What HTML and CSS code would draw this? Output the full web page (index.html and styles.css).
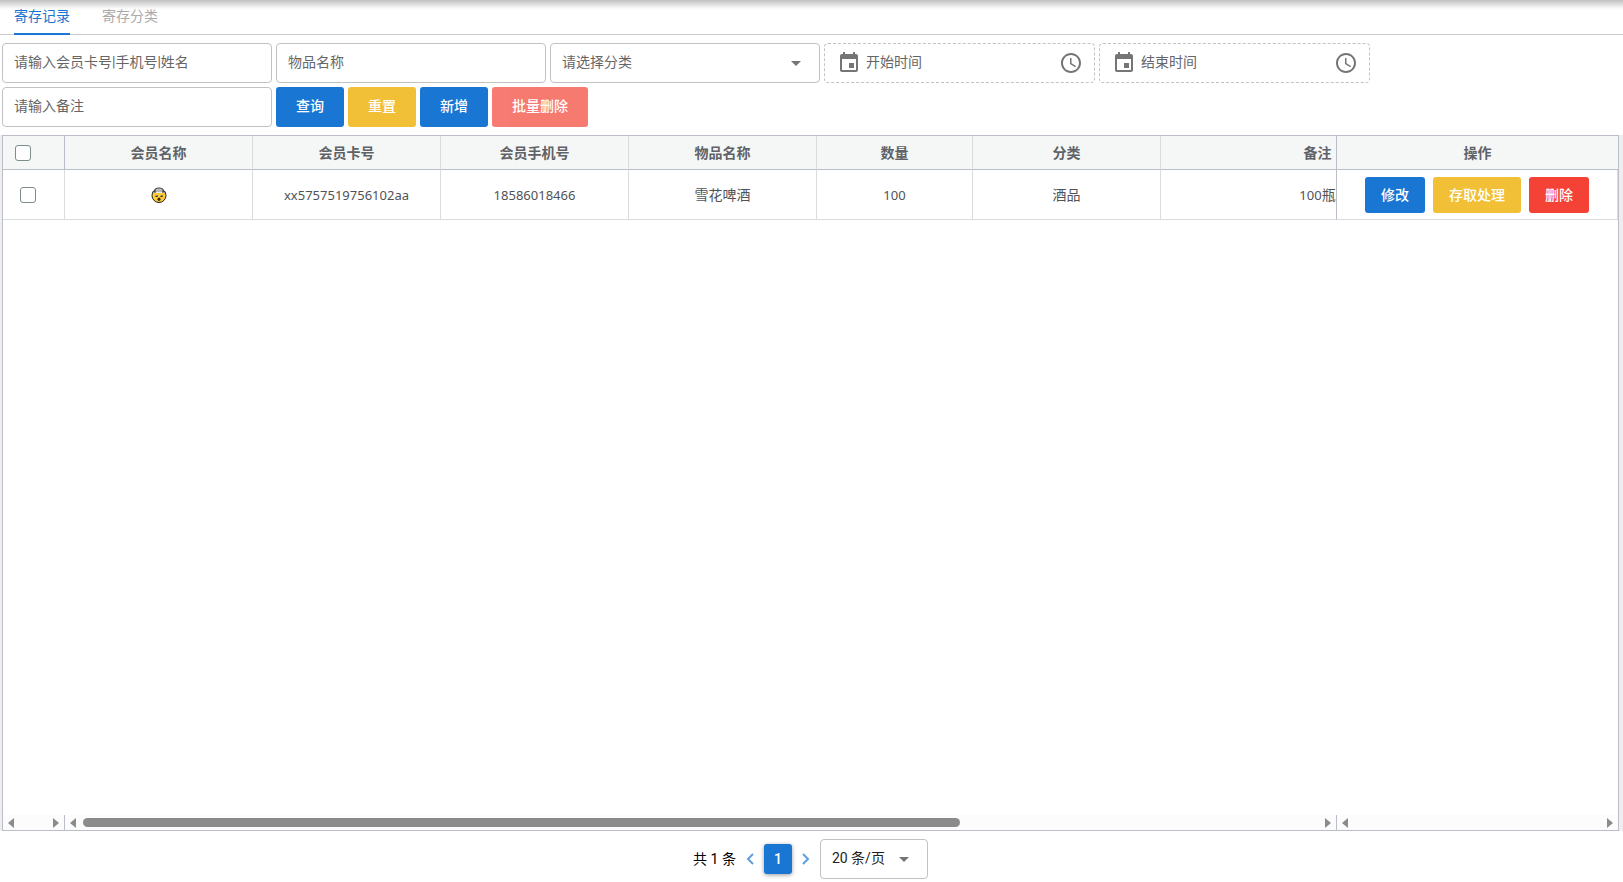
FILE: index.html
```html
<!DOCTYPE html>
<html lang="zh-CN">
<head>
<meta charset="utf-8">
<title>寄存记录</title>
<link rel="stylesheet" href="styles.css">
</head>
<body>
<nav class="tabs">
  <button class="tab tab-active" type="button">寄存记录</button>
  <button class="tab" type="button">寄存分类</button>
</nav>

<form class="filters">
  <input class="field" type="text" aria-label="会员" placeholder="请输入会员卡号|手机号|姓名">
  <input class="field" type="text" aria-label="物品名称" placeholder="物品名称">
  <div class="picker">
    <select class="field" aria-label="分类"><option>请选择分类</option></select>
    <svg class="caret" viewBox="0 0 24 24" aria-hidden="true"><path d="M7 10l5 5 5-5z"/></svg>
  </div>
  <label class="field date">
    <svg class="icon" viewBox="0 0 24 24" aria-hidden="true"><path d="M17 12h-5v5h5v-5zM16 1v2H8V1H6v2H5c-1.11 0-1.99.9-1.99 2L3 19c0 1.1.89 2 2 2h14c1.1 0 2-.9 2-2V5c0-1.1-.9-2-2-2h-1V1h-2zm3 18H5V8h14v11z"/></svg>
    <input class="date-input" type="text" aria-label="开始时间" placeholder="开始时间">
    <svg class="icon" viewBox="0 0 24 24" aria-hidden="true"><path d="M11.99 2C6.47 2 2 6.48 2 12s4.47 10 9.99 10C17.52 22 22 17.52 22 12S17.52 2 11.99 2zM12 20c-4.42 0-8-3.58-8-8s3.58-8 8-8 8 3.58 8 8-3.58 8-8 8zm.5-13H11v6l5.25 3.15.75-1.23-4.5-2.67z"/></svg>
  </label>
  <label class="field date">
    <svg class="icon" viewBox="0 0 24 24" aria-hidden="true"><path d="M17 12h-5v5h5v-5zM16 1v2H8V1H6v2H5c-1.11 0-1.99.9-1.99 2L3 19c0 1.1.89 2 2 2h14c1.1 0 2-.9 2-2V5c0-1.1-.9-2-2-2h-1V1h-2zm3 18H5V8h14v11z"/></svg>
    <input class="date-input" type="text" aria-label="结束时间" placeholder="结束时间">
    <svg class="icon" viewBox="0 0 24 24" aria-hidden="true"><path d="M11.99 2C6.47 2 2 6.48 2 12s4.47 10 9.99 10C17.52 22 22 17.52 22 12S17.52 2 11.99 2zM12 20c-4.42 0-8-3.58-8-8s3.58-8 8-8 8 3.58 8 8-3.58 8-8 8zm.5-13H11v6l5.25 3.15.75-1.23-4.5-2.67z"/></svg>
  </label>
  <input class="field" type="text" aria-label="备注" placeholder="请输入备注">
  <button class="btn primary" type="button">查询</button>
  <button class="btn warning" type="button">重置</button>
  <button class="btn primary" type="button">新增</button>
  <button class="btn danger" type="button" disabled>批量删除</button>
</form>

<main class="grid-area">
  <div class="grid">
    <section class="pane pane-left">
      <table class="table">
        <thead><tr><th class="pick-head"><input class="check" type="checkbox" aria-label="全选"></th></tr></thead>
        <tbody><tr><td class="pick-cell"><input class="check" type="checkbox" aria-label="选择此行"></td></tr></tbody>
      </table>
      <div class="scroll">
        <svg class="arrow" viewBox="0 0 6 10" aria-hidden="true"><path d="M6 0v10L0 5z"/></svg>
        <div class="track"></div>
        <svg class="arrow" viewBox="0 0 6 10" aria-hidden="true"><path d="M0 0v10l6-5z"/></svg>
      </div>
    </section>
    <section class="pane pane-main">
      <table class="table table-wide">
        <colgroup><col class="c-std"><col class="c-std"><col class="c-std"><col class="c-std"><col class="c-qty"><col class="c-std"><col class="c-note"></colgroup>
        <thead><tr><th>会员名称</th><th>会员卡号</th><th>会员手机号</th><th>物品名称</th><th>数量</th><th>分类</th><th>备注</th></tr></thead>
        <tbody><tr>
          <td>
            <svg class="emoji" viewBox="0 0 16 16" role="img" aria-label="🤯">
              <circle cx="8" cy="8.500" r="7" fill="#fc3" stroke="#222" stroke-width="1"/>
              <path d="M1 6C1 4.800 2 4.200 3.500 4 3 1.500 5.500.5 8 .5s5 1 4.500 3.500C14 4.200 15 4.800 15 6z" fill="#444"/>
              <path d="M4.500 4.500C4 2 6 1.500 8 1.500S12 2 11.500 4.500z" fill="#b9bcbe"/>
              <path d="M2 5h12v1H2z" fill="#8a8d91"/>
              <path d="M5 4.500h6v1.500H5z" fill="#e9eaec"/>
              <path d="M4.500 8h2v2h-2zM9.500 8h2v2h-2z" fill="#222"/>
              <path d="M4.500 8h1v1h-1zM9.500 8h1v1h-1z" fill="#fff3ce"/>
              <ellipse cx="8" cy="12.200" rx="1.500" ry="1.800" fill="#3b2413"/>
            </svg>
          </td>
          <td class="latin">xx5757519756102aa</td><td class="latin">18586018466</td><td>雪花啤酒</td><td class="latin">100</td><td>酒品</td><td><span class="latin">100</span>瓶</td>
        </tr></tbody>
      </table>
      <div class="scroll">
        <svg class="arrow" viewBox="0 0 6 10" aria-hidden="true"><path d="M6 0v10L0 5z"/></svg>
        <div class="track"><div class="thumb"></div></div>
        <svg class="arrow" viewBox="0 0 6 10" aria-hidden="true"><path d="M0 0v10l6-5z"/></svg>
      </div>
    </section>
    <section class="pane pane-right">
      <table class="table">
        <thead><tr><th>操作</th></tr></thead>
        <tbody><tr><td>
          <div class="actions">
            <button class="btn small primary" type="button">修改</button>
            <button class="btn small warning" type="button">存取处理</button>
            <button class="btn small danger" type="button">删除</button>
          </div>
        </td></tr></tbody>
      </table>
      <div class="scroll">
        <svg class="arrow" viewBox="0 0 6 10" aria-hidden="true"><path d="M6 0v10L0 5z"/></svg>
        <div class="track"></div>
        <svg class="arrow" viewBox="0 0 6 10" aria-hidden="true"><path d="M0 0v10l6-5z"/></svg>
      </div>
    </section>
  </div>
</main>

<footer class="pager">
  <span>共 1 条</span>
  <button class="step" type="button" aria-label="上一页"><svg viewBox="0 0 8 12" aria-hidden="true"><path d="M7 1L2 6l5 5"/></svg></button>
  <button class="page" type="button">1</button>
  <button class="step" type="button" aria-label="下一页"><svg viewBox="0 0 8 12" aria-hidden="true"><path d="M1 1l5 5-5 5"/></svg></button>
  <div class="picker page-size">
    <select class="field" aria-label="每页条数"><option>20 条/页</option></select>
    <svg class="caret" viewBox="0 0 24 24" aria-hidden="true"><path d="M7 10l5 5 5-5z"/></svg>
  </div>
</footer>
</body>
</html>
```
FILE: styles.css
```css
* { box-sizing: border-box; }

body {
  margin: 0;
  height: 100vh;
  display: flex;
  flex-direction: column;
  background: #fff;
  color: #000;
  font: 14px/20px Roboto, "Noto Sans CJK SC", sans-serif;
}

button, input, select { font: inherit; margin: 0; }

.tabs {
  display: flex;
  gap: 32px;
  height: 35px;
  padding: 0 14px;
  border-bottom: 1px solid #ccc;
  background: linear-gradient(#c0c0c0, #dcdcdc 4px, #f8f8f8 8px, #fff 10px);
}

.tab {
  height: 35px;
  padding: 0 0 2px;
  border: 0;
  border-bottom: 2px solid transparent;
  background: none;
  color: #aaa;
}

.tab-active { color: #1976d2; border-bottom-color: #1976d2; }

.filters {
  display: flex;
  flex-wrap: wrap;
  gap: 4px;
  padding: 8px 2px;
}

.field {
  width: 270px;
  height: 40px;
  padding: 0 11px 2px;
  border: 1px solid #c2c2c2;
  border-radius: 4px;
  background: #fff;
  color: #666;
}

.field::placeholder, .date-input::placeholder { color: #666; opacity: 1; }

.picker { display: grid; align-items: center; }
.picker > * { grid-area: 1 / 1; }
.picker .field { appearance: none; }
.caret {
  width: 24px;
  height: 24px;
  margin-right: 12px;
  justify-self: end;
  fill: #757575;
  pointer-events: none;
}

.date {
  display: flex;
  align-items: center;
  gap: 5px;
  width: 271px;
  padding: 0 11px 0 12px;
  border-style: dashed;
}

.icon { width: 24px; height: 24px; flex: none; fill: #757575; }

.date-input {
  flex: 1;
  min-width: 0;
  padding: 0 0 2px;
  border: 0;
  background: none;
}

.btn {
  height: 40px;
  padding: 0 20px 2px;
  border: 0;
  border-radius: 3px;
  color: #fff;
  font-weight: 500;
}

.primary { background: #1976d2; }
.warning { background: #f2c037; }
.danger { background: #f44336; }
.danger:disabled { opacity: .7; }
.small { height: 36px; padding: 0 16px; }

.grid-area {
  flex: 1;
  min-height: 0;
  display: flex;
  padding: 0 4px 0 2px;
  background: #eee;
}

.grid {
  flex: 1;
  min-width: 0;
  display: flex;
  border: 1px solid #babfc7;
  background: #fff;
}

.pane {
  display: flex;
  flex-direction: column;
  justify-content: space-between;
  overflow: hidden;
}

.pane-left { width: 62px; }
.pane-main { flex: 1; min-width: 0; }
.pane-right { width: 282px; }

.pane-left th, .pane-left .scroll { border-right: 1px solid #babfc7; }
.pane-right th, .pane-right td, .pane-right .scroll { border-left: 1px solid #babfc7; }

.table {
  width: 100%;
  border-collapse: separate;
  border-spacing: 0;
  table-layout: fixed;
}

.table-wide { width: 1410px; }
.c-std { width: 188px; }
.c-qty { width: 156px; }
.c-note { width: 314px; }

th {
  height: 34px;
  padding: 0;
  border-bottom: 1px solid #babfc7;
  border-right: 1px solid #d9dcdf;
  background: #f5f7f7;
  color: #5f6266;
  font-weight: 700;
}

td {
  height: 50px;
  padding: 0;
  border-bottom: 1px solid #d9dcde;
  border-right: 1px solid #d9dcde;
  color: #505356;
  text-align: center;
}

.pane-right th { border-right: 0; }

.latin { font-family: "Noto Sans", sans-serif; font-size: 13px; }

.pick-head { padding-left: 12px; text-align: left; }
.pick-cell { padding-left: 17px; text-align: left; }

.check {
  appearance: none;
  display: block;
  width: 16px;
  height: 16px;
  border: 1px solid #7f8c8d;
  border-radius: 3px;
  background: #fff;
}

.emoji { display: block; width: 16px; height: 16px; margin: 0 auto; }

.actions { display: flex; justify-content: center; gap: 8px; }

.scroll {
  display: flex;
  align-items: center;
  gap: 7px;
  height: 15px;
  padding: 0 5px;
  background: #fcfcfc;
}

.arrow { width: 6px; height: 10px; fill: #8b8b8b; flex: none; }
.track { flex: 1; min-width: 0; }
.thumb { width: 71%; height: 9px; border-radius: 5px; background: #8b8b8b; }

.pager {
  display: flex;
  align-items: center;
  justify-content: center;
  padding: 8px 2px 3px 0;
}

.step {
  width: 28px;
  height: 28px;
  padding: 0;
  border: 0;
  background: none;
}

.step svg {
  display: block;
  width: 8px;
  height: 12px;
  margin: 0 auto;
  fill: none;
  stroke: #5e9fe0;
  stroke-width: 2;
}

.page {
  width: 28px;
  height: 30px;
  padding: 0;
  border: 0;
  border-radius: 3px;
  background: #1976d2;
  color: #fff;
  font-weight: 500;
  box-shadow: 0 1px 4px rgba(0, 0, 0, .4);
}

.page-size .field { width: 108px; color: #222; }
```
